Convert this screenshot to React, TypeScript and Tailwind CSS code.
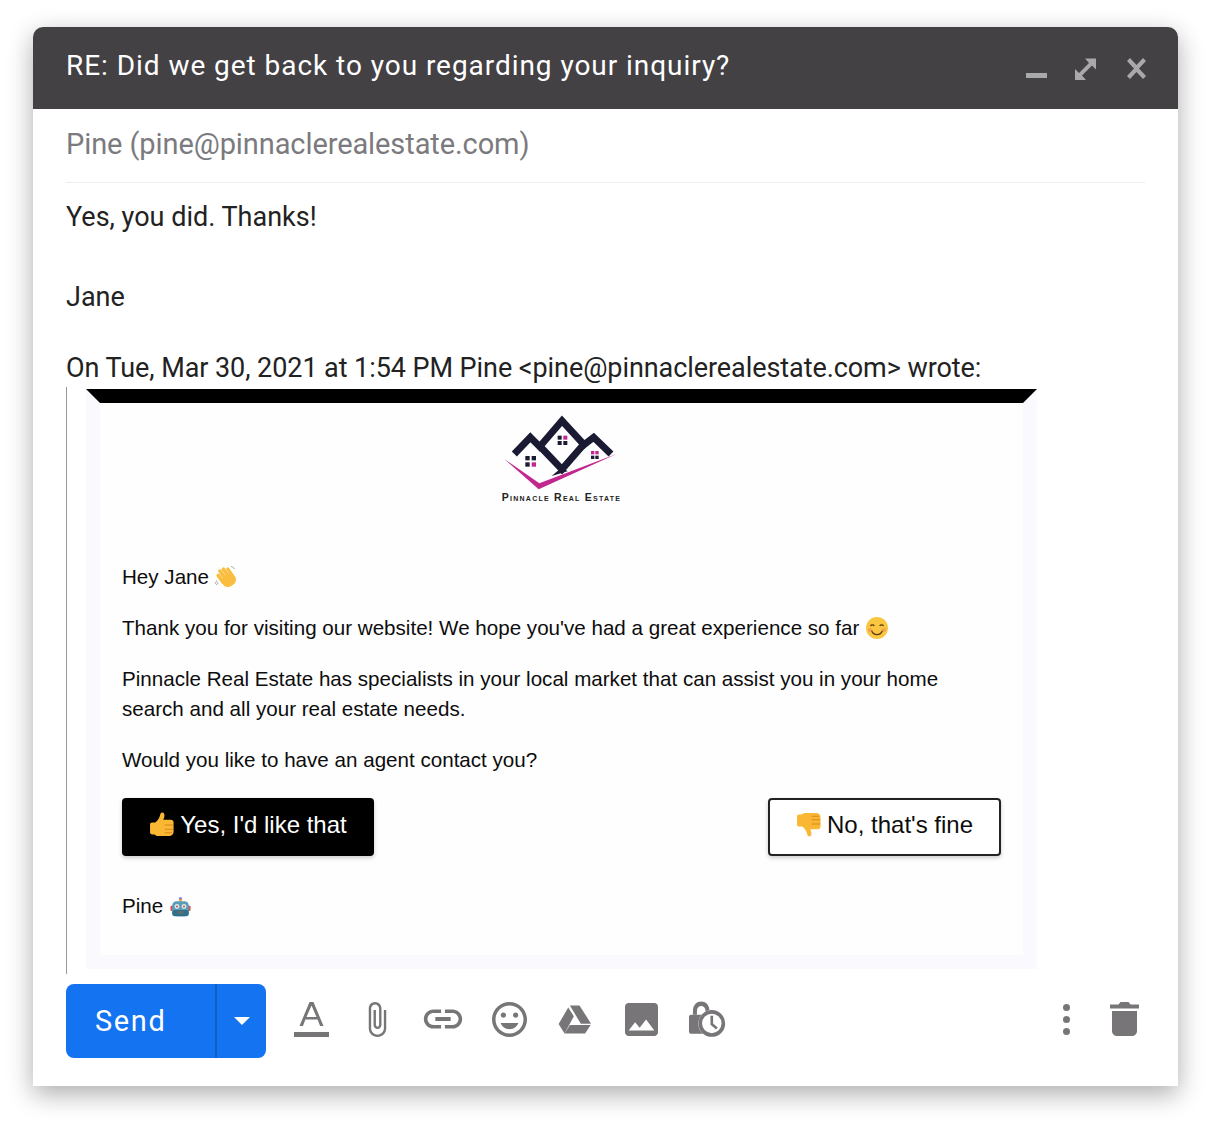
import type { ReactNode } from "react";

const sans = "font-['Roboto',sans-serif]";
const arial = "font-['Liberation_Sans',Arial,sans-serif]";

function Icon({ box, w, h, children }: { box: string; w: string; h: string; children: ReactNode }) {
  return (
    <svg viewBox={box} className={`${w} ${h} shrink-0 fill-[#777578]`}>
      {children}
    </svg>
  );
}

function Logo() {
  // drawn in a 3x grid, shown at 170x100
  return (
    <svg viewBox="-10 69 510 300" className="h-[100px] w-[170px]">
      <path
        d="M102 222L150 172L178 200L245 122L311 194L340 172L392 222"
        fill="none"
        stroke="#1a1a33"
        strokeWidth="21"
      />
      <path d="M178 198L245 268L311 192" fill="none" stroke="#1a1a33" strokeWidth="21" />
      <path d="M245 262L214 288L262 274Z" fill="#1a1a33" />
      <path d="M72 237L175 328L410 221L177 310Z" fill="#c2278f" />
      <rect x="232" y="167" width="12" height="12" fill="#1a1a33" />
      <rect x="249" y="167" width="12" height="12" fill="#c2278f" />
      <rect x="232" y="183" width="12" height="12" fill="#1a1a33" />
      <rect x="249" y="183" width="12" height="12" fill="#1a1a33" />
      <rect x="135" y="228" width="13" height="13" fill="#1a1a33" />
      <rect x="154" y="228" width="13" height="13" fill="#1a1a33" />
      <rect x="135" y="247" width="13" height="13" fill="#1a1a33" />
      <rect x="154" y="247" width="13" height="13" fill="#c2278f" />
      <rect x="332" y="213" width="10" height="10" fill="#c2278f" />
      <rect x="345" y="213" width="10" height="10" fill="#c2278f" />
      <rect x="332" y="227" width="10" height="10" fill="#1a1a33" />
      <rect x="345" y="227" width="10" height="10" fill="#1a1a33" />
    </svg>
  );
}

function WaveEmoji() {
  return (
    <svg viewBox="0 0 24 24" className="ml-[5px] inline-block h-[24px] w-[24px] align-[-5px]">
      <g transform="rotate(-35 13 13)" fill="#f9bd3f">
        <rect x="5.5" y="4" width="3.6" height="12" rx="1.8" />
        <rect x="9.4" y="1.5" width="3.6" height="14" rx="1.8" />
        <rect x="13.3" y="2" width="3.6" height="14" rx="1.8" />
        <rect x="17.1" y="4.5" width="3.4" height="12" rx="1.7" />
        <rect x="6" y="10" width="14.5" height="12" rx="6" />
      </g>
      <path d="M2.5 15.5c.3 1.6 1 2.8 2 3.8M1 17c.4 1.3 1 2.3 1.8 3" stroke="#9aa0a6" strokeWidth="0.9" fill="none" />
      <path d="M17 1.5c1.6.3 2.8 1.2 3.6 2.6" stroke="#9aa0a6" strokeWidth="0.9" fill="none" />
    </svg>
  );
}

function SmileEmoji() {
  return (
    <svg viewBox="0 0 24 24" className="ml-[6px] inline-block h-[24px] w-[24px] align-[-5px]">
      <circle cx="12" cy="12" r="11" fill="#fbc63f" />
      <path d="M5.5 10c.8-1.5 3-1.5 3.8 0M14.7 10c.8-1.5 3-1.5 3.8 0" stroke="#5b3a10" strokeWidth="1.3" fill="none" />
      <path d="M6.5 14.5c1.2 3 3.2 4.2 5.5 4.2s4.3-1.2 5.5-4.2" stroke="#5b3a10" strokeWidth="1.3" fill="none" />
      <circle cx="5" cy="14" r="2" fill="#f28a5c" opacity="0.6" />
      <circle cx="19" cy="14" r="2" fill="#f28a5c" opacity="0.6" />
    </svg>
  );
}

function ThumbEmoji({ down }: { down?: boolean }) {
  return (
    <svg viewBox="0 0 24 24" className={`h-[25px] w-[25px] shrink-0 ${down ? "rotate-180 -scale-x-100" : ""}`}>
      <path
        d="M1 12c0-1.2.8-2 2-2h3c2-1.5 3.5-3.5 4.5-6.5.3-1.5.8-3 2.2-3 1.7 0 2.3 1.5 2.1 3.300-.1 1.300-.6 2.700-1.200 3.700h7c2 0 3 1 3 2.500v9c0 2.500-2 4-4 4H9c-1.500 0-2.500-.500-3.500-1.500H3c-1.200 0-2-.800-2-2z"
        fill="#f9b733"
      />
      <path d="M15 12.500h8M15 16.500h8M15 20h7" stroke="#d9861c" strokeWidth="1" fill="none" />
    </svg>
  );
}

function RobotEmoji() {
  return (
    <svg viewBox="0 0 24 24" className="ml-[7px] inline-block h-[21px] w-[21px] align-[-4px]">
      <circle cx="12" cy="2.800" r="1.800" fill="#8d7ad6" />
      <rect x="10.500" y="3.500" width="3" height="3" fill="#f29a38" />
      <rect x="0.500" y="11" width="3" height="6" rx="1" fill="#d9534f" />
      <rect x="20.500" y="11" width="3" height="6" rx="1" fill="#d9534f" />
      <rect x="2.500" y="6" width="19" height="17" rx="5" fill="#5b9db5" />
      <rect x="2.500" y="16" width="19" height="7" rx="3" fill="#2f6f8a" />
      <circle cx="8" cy="12" r="2.800" fill="#d8e9ee" />
      <circle cx="16" cy="12" r="2.800" fill="#d8e9ee" />
      <circle cx="8" cy="12" r="1.200" fill="#d9534f" />
      <circle cx="16" cy="12" r="1.200" fill="#d9534f" />
      <rect x="8" y="17" width="8" height="3.500" rx="1" fill="#5a6b73" />
    </svg>
  );
}

function EmailCard() {
  return (
    <div className="h-[580px] w-[951px] border-[14px] border-t-black border-r-[#faf9fd] border-b-[#faf9fd] border-l-[#faf9fd] bg-[#fefefe] px-[22px]">
      <div className={`${arial} text-[20.600px] leading-[30px] text-[#0d0d0d]`}>
        <div className="flex h-[159px] flex-col items-center">
          <Logo />
          <div className="-mt-[12px] text-[10.500px] leading-[12px] font-bold tracking-[1.250px] text-[#222] [font-variant:small-caps]">
            Pinnacle Real Estate
          </div>
        </div>
        <p>
          Hey Jane
          <WaveEmoji />
        </p>
        <p className="mt-[21px]">
          Thank you for visiting our website! We hope you've had a great experience so far
          <SmileEmoji />
        </p>
        <p className="mt-[21px]">
          Pinnacle Real Estate has specialists in your local market that can assist you in your home search and all
          your real estate needs.
        </p>
        <p className="mt-[21px]">Would you like to have an agent contact you?</p>
        <div className="mt-[23px] flex justify-between">
          <a className="flex h-[58px] w-[252px] items-center justify-center gap-[6px] rounded-[4px] bg-black pb-[5px] text-[24px] text-white shadow-[0_2px_4px_rgba(0,0,0,0.2)]">
            <ThumbEmoji />
            Yes, I'd like that
          </a>
          <a className="flex h-[58px] w-[233px] items-center justify-center gap-[6px] rounded-[4px] border-2 border-[#222] bg-white pb-[5px] text-[24px] text-[#0d0d0d] shadow-[0_2px_4px_rgba(0,0,0,0.2)]">
            <ThumbEmoji down />
            No, that's fine
          </a>
        </div>
        <p className="mt-[35px]">
          Pine
          <RobotEmoji />
        </p>
      </div>
    </div>
  );
}

function Toolbar() {
  return (
    <div className="flex h-[112px] items-start pt-[10px]">
      <div className={`${sans} flex h-[74px] w-[200px] overflow-hidden rounded-[8px] bg-[#1473f0] text-white`}>
        <div className="flex w-[151px] items-center border-r-2 border-[#0f5fc9] pt-[1px] pl-[29px] text-[29px] tracking-[1.600px]">
          Send
        </div>
        <div className="flex flex-1 items-center justify-center">
          <div className="h-0 w-0 border-x-[8px] border-t-[8px] border-x-transparent border-t-white" />
        </div>
      </div>
      <div className="ml-[12px] flex h-[74px] items-center pb-[4px]">
        <div className="flex w-[66px] justify-center">
          <Icon box="0 0 35 35" w="w-[35px]" h="h-[35px]">
            <path d="M15.500 0h4l10 24h-3.400l-2.500-6.500H11.400L8.900 24H5.500zM17.500 3.500L12.500 15h10z" />
            <rect x="0" y="30" width="35" height="5" />
          </Icon>
        </div>
        <div className="flex w-[66px] justify-center">
          <Icon box="4 0 17 24" w="w-[27px]" h="h-[39px]">
            <path d="M16.500 6v11.500c0 2.210-1.790 4-4 4s-4-1.790-4-4V5c0-1.380 1.120-2.500 2.500-2.500s2.500 1.120 2.500 2.500v10.500c0 .550-.450 1-1 1s-1-.450-1-1V6H10v9.500c0 1.380 1.120 2.500 2.500 2.500s2.500-1.120 2.500-2.500V5c0-2.210-1.790-4-4-4S7 2.790 7 5v12.500c0 3.040 2.460 5.500 5.500 5.500s5.500-2.460 5.500-5.500V6h-1.500z" />
          </Icon>
        </div>
        <div className="flex w-[66px] justify-center">
          <Icon box="0 0 24 24" w="w-[46px]" h="h-[46px]">
            <path d="M3.900 12c0-1.710 1.390-3.100 3.100-3.100h4V7H7c-2.760 0-5 2.240-5 5s2.240 5 5 5h4v-1.900H7c-1.710 0-3.100-1.390-3.100-3.100zM8 13h8v-2H8v2zm9-6h-4v1.900h4c1.710 0 3.100 1.390 3.100 3.100s-1.390 3.100-3.100 3.100h-4V17h4c2.760 0 5-2.240 5-5s-2.240-5-5-5z" />
          </Icon>
        </div>
        <div className="flex w-[66px] justify-center">
          <Icon box="2 2 20 20" w="w-[35px]" h="h-[35px]">
            <path d="M11.990 2C6.470 2 2 6.480 2 12s4.470 10 9.990 10C17.520 22 22 17.520 22 12S17.520 2 11.990 2zM12 20c-4.420 0-8-3.580-8-8s3.580-8 8-8 8 3.580 8 8-3.580 8-8 8zm3.500-9c.830 0 1.500-.670 1.500-1.500S16.330 8 15.500 8 14 8.670 14 9.500s.670 1.500 1.500 1.500zm-7 0c.830 0 1.500-.670 1.500-1.500S9.330 8 8.500 8 7 8.670 7 9.500 7.670 11 8.500 11zm3.500 6.500c2.330 0 4.310-1.460 5.110-3.500H6.890c.800 2.040 2.780 3.500 5.110 3.500z" />
          </Icon>
        </div>
        <div className="flex w-[66px] justify-center">
          <Icon box="470 125 115 105" w="w-[38px]" h="h-[35px]">
            <path d="M512 135h29l35 55h-31z" />
            <path d="M507 141l17 27-28 52-18-29z" />
            <path d="M512 194h63l-17 26h-62z" />
          </Icon>
        </div>
        <div className="flex w-[66px] justify-center">
          <Icon box="3 3 18 18" w="w-[35px]" h="h-[33px]">
            <path d="M21 19V5c0-1.100-.900-2-2-2H5c-1.100 0-2 .900-2 2v14c0 1.100.900 2 2 2h14c1.100 0 2-.900 2-2zM8.500 13.500l2.500 3.010L14.500 12l4.500 6H5l3.500-4.500z" />
          </Icon>
        </div>
        <div className="flex w-[66px] justify-center">
          <Icon box="865 120 115 115" w="w-[38px]" h="h-[38px]">
            <path d="M880 165v-12c0-38 50-38 50 0v12h-12v-12c0-20-26-20-26 0v12z" />
            <rect x="868" y="165" width="62" height="57" rx="6" />
            <circle cx="937" cy="191" r="41" fill="#fff" />
            <circle cx="937" cy="191" r="35" fill="none" stroke="#777578" strokeWidth="11" />
            <path d="M933 168h8v23l14 12-5 6-17-14z" />
          </Icon>
        </div>
      </div>
      <div className="ml-auto mr-[6px] flex h-[74px] items-center gap-[40px] pb-[4px]">
        <Icon box="0 0 7 31" w="w-[7px]" h="h-[31px]">
          <circle cx="3.500" cy="3.500" r="3.500" />
          <circle cx="3.500" cy="15.500" r="3.500" />
          <circle cx="3.500" cy="27.500" r="3.500" />
        </Icon>
        <Icon box="0 0 29 34" w="w-[29px]" h="h-[34px]">
          <path d="M0 2.500h8.500l2-2.500h8l2 2.500H29v4H0z" />
          <path d="M2 9h25v20c0 2.800-2.200 5-5 5H7c-2.800 0-5-2.200-5-5z" />
        </Icon>
      </div>
    </div>
  );
}

export default function App() {
  return (
    <div className="h-[1128px] w-[1211px] overflow-hidden bg-white pt-[27px] pl-[33px]">
      <div className="h-[1059px] w-[1145px] rounded-t-[10px] bg-white shadow-[0_8px_26px_rgba(0,0,0,0.33)]">
        <header className={`${sans} flex h-[82px] items-center justify-between rounded-t-[10px] bg-[#434144] pb-[5px] pl-[33px] pr-[32px]`}>
          <h1 className="text-[28px] font-normal tracking-[0.950px] text-white">
            RE: Did we get back to you regarding your inquiry?
          </h1>
          <div className="flex items-center pt-[6px]">
            <svg viewBox="0 0 120 22" className="h-[22px] w-[120px] fill-[#a9a8aa]">
              <rect x="0" y="15" width="21" height="5" />
              <path d="M49 22v-11l4 4 10-10-4-4.500h11v11l-4-4-10 10 4 4.500z" />
              <path d="M101 3l3-3 6.500 7 6.500-7 3 3-7 7.500 7 7.500-3 3-6.500-7-6.500 7-3-3 7-7.500z" />
            </svg>
          </div>
        </header>
        <div className="px-[33px]">
          <div className={`${sans} flex h-[74px] items-center border-b border-[#eeeef2] pb-[2px] text-[29px] tracking-[-0.090px] text-[#7b7a7e]`}>
            Pine (pine@pinnaclerealestate.com)
          </div>
          <div className={`${sans} h-[204px] pt-[14px] text-[27px] leading-[40px] text-[#222]`}>
            <p>Yes, you did. Thanks!</p>
            <p className="mt-[40px]">Jane</p>
            <p className="mt-[31px] tracking-[-0.070px]">On Tue, Mar 30, 2021 at 1:54 PM Pine &lt;pine@pinnaclerealestate.com&gt; wrote:</p>
          </div>
          <blockquote className="h-[587px] border-l border-[#9a9a9a] pt-[2px] pl-[19px]">
            <EmailCard />
          </blockquote>
          <Toolbar />
        </div>
      </div>
    </div>
  );
}
